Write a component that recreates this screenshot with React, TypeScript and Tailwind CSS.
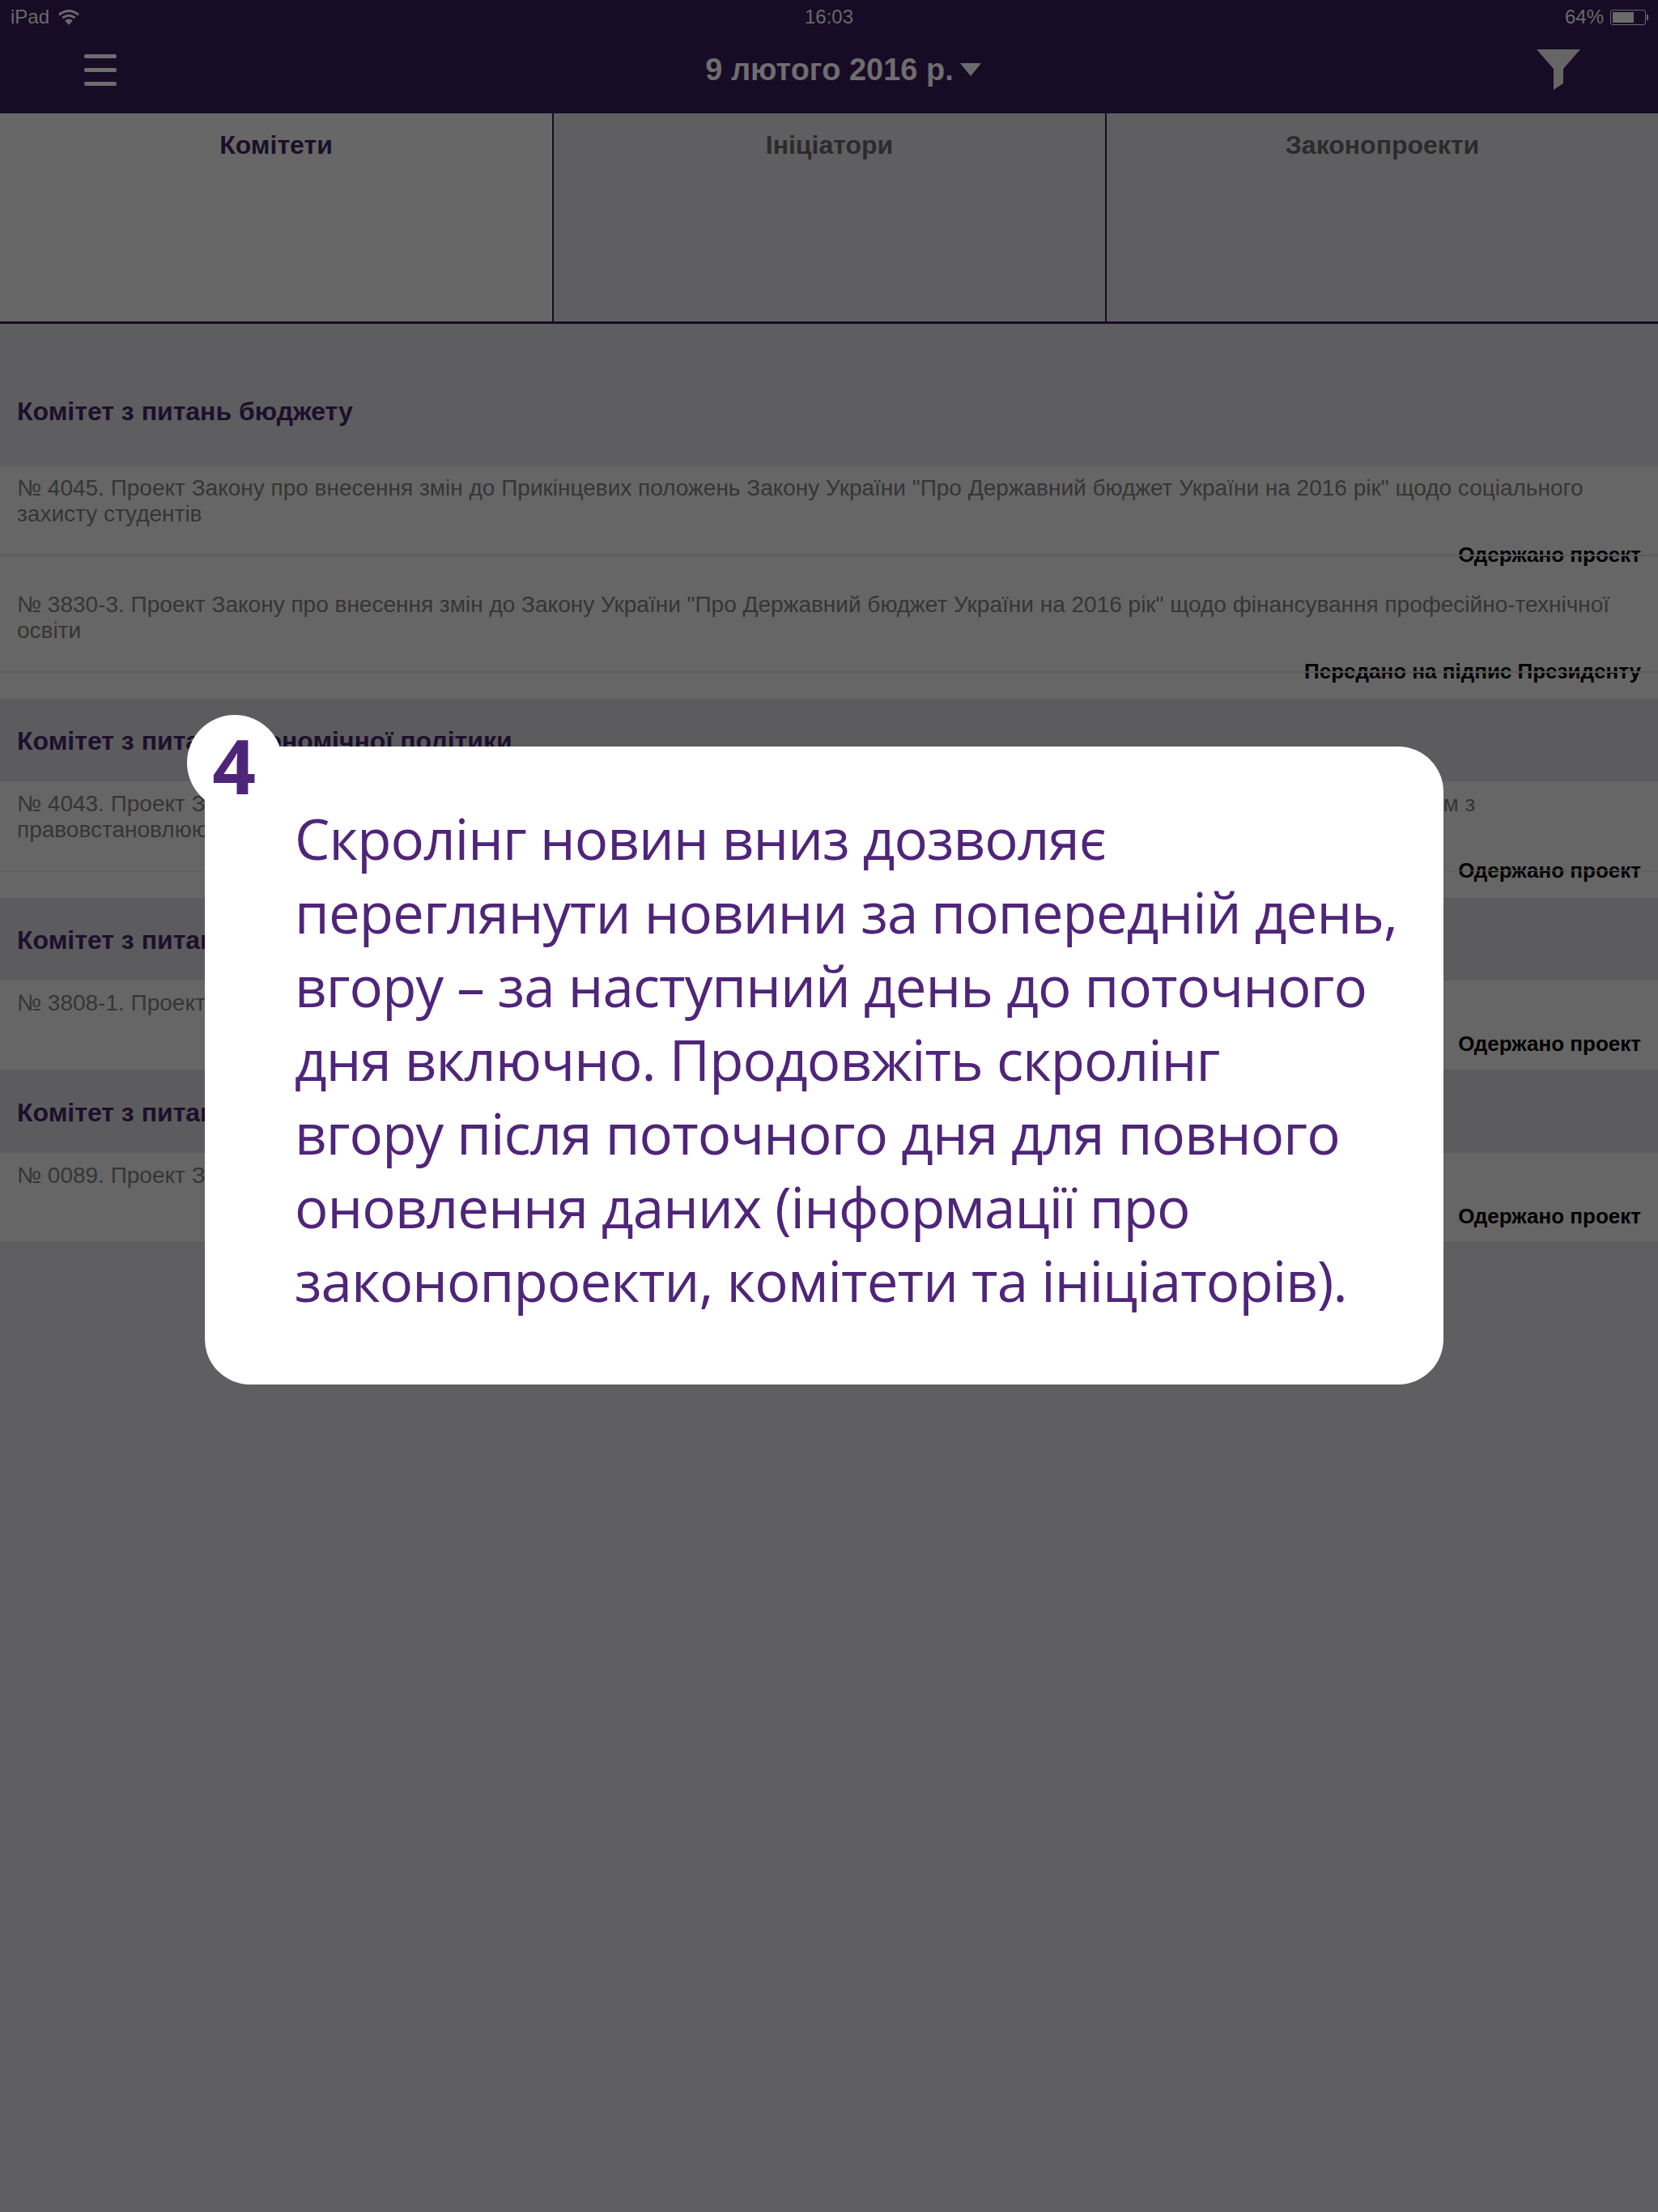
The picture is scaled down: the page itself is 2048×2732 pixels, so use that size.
import React from 'react';

const sans = 'font-["Liberation_Sans",Arial,sans-serif]';

type Row = { text: React.ReactNode; status: string; tall?: boolean; thinLine?: boolean };
type Section = { title: string; first?: boolean; rows: Row[] };

const sections: Section[] = [
    {
        title: 'Комітет з питань бюджету',
        first: true,
        rows: [
            {
                tall: true,
                status: 'Одержано проект',
                text: (
                    <>
                        № 4045. Проект Закону про внесення змін до Прикінцевих положень Закону України "Про Державний бюджет України на 2016 рік" щодо соціального
                        <br />
                        захисту студентів
                    </>
                ),
            },
            {
                tall: true,
                status: 'Передано на підпис Президенту',
                text: (
                    <>
                        № 3830-3. Проект Закону про внесення змін до Закону України "Про Державний бюджет України на 2016 рік" щодо фінансування професійно-технічної
                        <br />
                        освіти
                    </>
                ),
            },
        ],
    },
    {
        title: 'Комітет з питань економічної політики',
        rows: [
            {
                tall: true,
                thinLine: true,
                status: 'Одержано проект',
                text: (
                    <>
                        № 4043. Проект Закону про внесення змін до деяких законів України щодо приведення у повну відповідність із законодавством ЄС норм з
                        <br />
                        правовстановлюючими документами
                    </>
                ),
            },
        ],
    },
    {
        title: 'Комітет з питань правової політики',
        rows: [{ status: 'Одержано проект', text: '№ 3808-1. Проект Закону про внесення змін до деяких законів України' }],
    },
    {
        title: 'Комітет з питань закордонних справ',
        rows: [{ status: 'Одержано проект', text: '№ 0089. Проект Закону про ратифікацію Угоди' }],
    },
];

const messageLines = [
    'Скролінг новин вниз дозволяє',
    'переглянути новини за попередній день,',
    'вгору – за наступний день до поточного',
    'дня включно. Продовжіть скролінг',
    'вгору після поточного дня для повного',
    'оновлення даних (інформації про',
    'законопроекти, комітети та ініціаторів).',
];

const StatusBar = () => (
    <div className="h-[40px] flex items-center justify-between text-[24px] leading-none text-[#6a6a6a] pt-[2px]">
        <div className="flex items-center gap-[11px] pl-[13px] w-[400px]">
            <span>iPad</span>
            <svg width="26" height="19" viewBox="0 0 26 19" fill="currentColor">
                <path d="M13 0C8 0 3.5 2 0 5.2l2 2.2C5 4.700 8.800 3 13 3s8 1.700 11 4.400l2-2.200C22.500 2 18 0 13 0z" />
                <path d="M13 5.800c-3.300 0-6.300 1.300-8.600 3.300l2 2.200C8.200 9.700 10.500 8.800 13 8.800s4.800.9 6.600 2.500l2-2.200c-2.300-2-5.300-3.300-8.600-3.300z" />
                <path d="M13 11.600c-1.800 0-3.400.7-4.700 1.800L13 19l4.700-5.600c-1.300-1.100-2.900-1.800-4.700-1.800z" />
            </svg>
        </div>
        <span>16:03</span>
        <div className="flex items-center justify-end gap-[8px] pr-[12px] w-[400px]">
            <span>64%</span>
            <div className="flex items-center gap-[1px]">
                <div className="w-[44px] h-[19px] border border-[#6a6a6a] rounded-[3px] p-[2px]">
                    <div className="h-full w-[26px] bg-[#6a6a6a]" />
                </div>
                <div className="w-[2px] h-[7px] bg-[#6a6a6a]" />
            </div>
        </div>
    </div>
);

const NavBar = () => (
    <div className="h-[100px] flex items-center justify-between pl-[104px] pr-[96px] pb-[8px]">
        <div className="flex flex-col gap-[12px] w-[40px]">
            <div className="h-[5px] bg-[#6e6e6e] rounded-[2px]" />
            <div className="h-[5px] bg-[#6e6e6e] rounded-[2px]" />
            <div className="h-[5px] bg-[#6e6e6e] rounded-[2px]" />
        </div>
        <div className="flex items-center gap-[8px] ml-[41px] text-[#6e6e6e]">
            <span className="text-[38px] leading-[40px] font-bold">9 лютого 2016 р.</span>
            <svg width="26" height="16" viewBox="0 0 26 16" fill="#6b6b6b">
                <polygon points="0,0 26,0 13,16" />
            </svg>
        </div>
        <svg width="54" height="50" viewBox="0 0 54 50" fill="#666666">
            <polygon points="0,0 54,0 33,24 33,42 21,50 21,24" />
        </svg>
    </div>
);

const Tabs = () => (
    <div className="h-[260px] grid grid-cols-[684px_683px_1fr] border-b-[3px] border-[#180b26] text-[32px] leading-[40px] font-bold">
        {['Комітети', 'Ініціатори', 'Законопроекти'].map((tab, i) => (
            <div
                key={tab}
                className={`pt-[19px] text-center ${i === 0 ? 'bg-[#676767] text-[#1b0f2a]' : 'text-[#2b2b2b]'} ${i < 2 ? 'border-r-2 border-[#180b26]' : ''}`}
            >
                {tab}
            </div>
        ))}
    </div>
);

const NewsRow = ({ row }: { row: Row }) => (
    <div className={`relative bg-[#666666] px-[21px] pt-[12px] ${row.tall ? 'h-[144px]' : 'h-[111px]'}`}>
        <p className="text-[28px] leading-[32px] text-[#353535] whitespace-nowrap">{row.text}</p>
        <p className="mt-[19px] text-[26px] leading-[30px] font-bold text-black text-right">{row.status}</p>
        {/* divider sits on top of the status text, same as the app */}
        <div className={`absolute left-0 right-0 top-[110px] bg-[#5b5b5b] ${row.thinLine ? 'h-[1px]' : 'h-[2px]'}`} />
    </div>
);

const NewsSection = ({ section }: { section: Section }) => (
    <div>
        <div className={`flex items-end px-[21px] ${section.first ? 'h-[175px] pb-[52px] bg-[#5e5e60]' : 'h-[102px] pb-[35px] bg-[#5c5c5e]'}`}>
            <h2 className="text-[32px] leading-[30px] font-bold text-[#1c0f2c]">{section.title}</h2>
        </div>
        {section.rows.map((row, i) => (
            <NewsRow key={i} row={row} />
        ))}
    </div>
);

const Message = () => (
    <>
        <div className="absolute left-[253px] top-[922px] w-[1530px] h-[788px] bg-white rounded-[56px] pl-[111px] pt-[68px]">
            <div className='font-["Open_Sans",sans-serif] text-[69px] leading-[91px] tracking-[-0.9px] text-[#4f2579] whitespace-nowrap'>
                {messageLines.map(line => (
                    <div key={line}>{line}</div>
                ))}
            </div>
        </div>
        <div className="absolute left-[231px] top-[883px] w-[118px] h-[118px] rounded-full bg-white flex items-center justify-center pt-[6px] pr-[2px]">
            <span className='font-["Open_Sans",sans-serif] text-[94px] leading-none font-bold text-[#4f2579]'>4</span>
        </div>
    </>
);

export default function App() {
    return (
        <div className={`relative w-[2048px] h-[2732px] overflow-hidden bg-[#5f5f61] ${sans}`}>
            <div className="bg-[#180b26]">
                <StatusBar />
                <NavBar />
            </div>
            <Tabs />
            {sections.map(section => (
                <NewsSection key={section.title} section={section} />
            ))}
            <Message />
        </div>
    );
}
